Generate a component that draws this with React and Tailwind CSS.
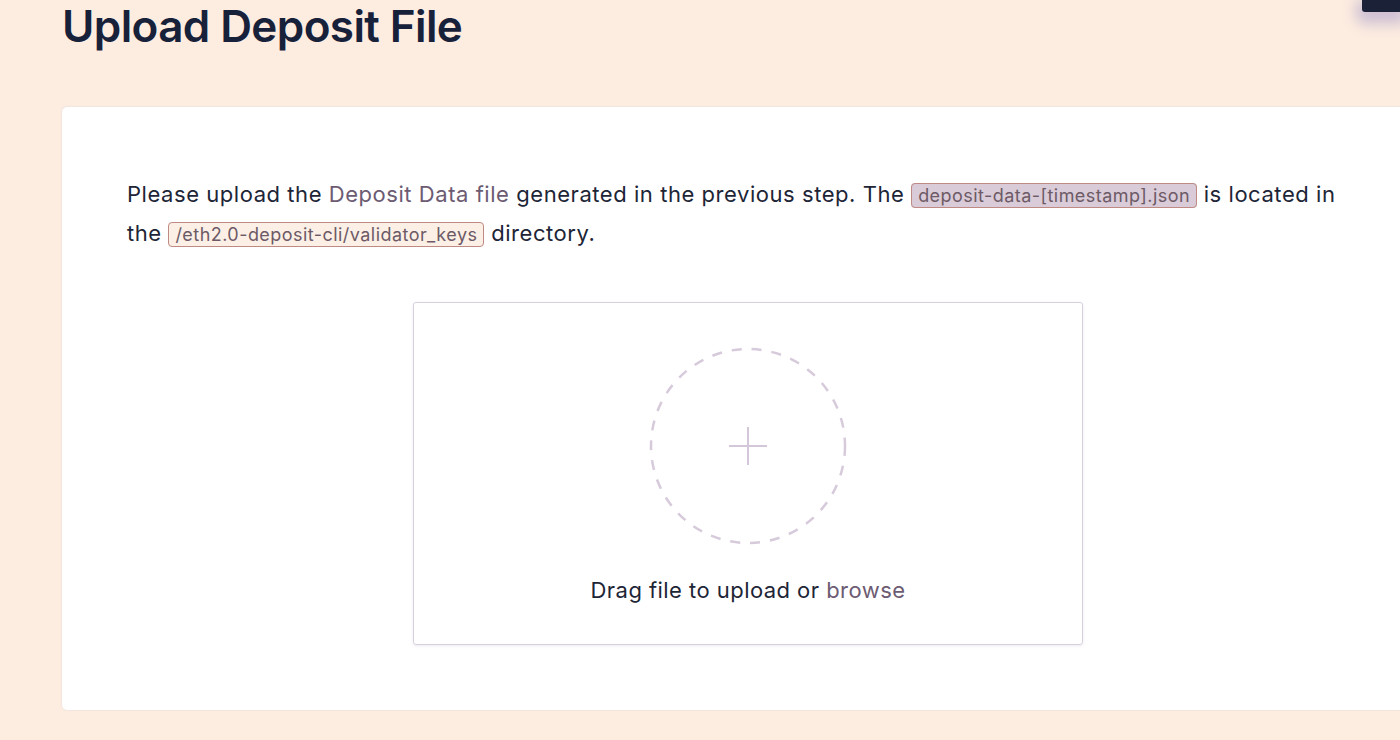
import React from 'react';

const Code = ({ children, selected }) => (
  <code
    className={`rounded-[4px] border border-[#c08a84] px-[6px] py-[1px] text-[18px] leading-[20px] tracking-[0.45px] text-[#6d5a66] ${
      selected ? 'bg-[#d9cbd7]' : 'bg-[#fcf0e6]'
    }`}
    style={{ fontFamily: 'Inter, "Noto Sans", sans-serif' }}
  >
    {children}
  </code>
);

export default function App() {
  return (
    <div
      className="h-[740px] w-[1400px] overflow-hidden bg-[#fdede0] pl-[62px]"
      style={{ fontFamily: 'Inter, "Noto Sans", sans-serif' }}
    >
      {/* Header */}
      <div className="flex items-start justify-between">
        <h1 className="text-[44px] font-semibold leading-[52px] tracking-[-0.6px] text-[#18213a]">
          Upload Deposit File
        </h1>
        <div className="h-[12px] w-[38px] rounded-bl-[3px] bg-[#1b2238] shadow-[0_6px_14px_6px_rgba(200,186,210,0.9)]"></div>
      </div>

      {/* Card */}
      <div className="mt-[55px] w-[1372px] rounded-[5px] bg-white px-[65px] pb-[65px] pt-[68px] shadow-[0_0_2px_rgba(200,200,215,0.6)]">
        <p className="text-[22px] leading-[39px] tracking-[0.55px] text-[#1d2536]">
          Please upload the <span className="text-[#6c5b72]">Deposit Data file</span> generated in the previous
          step. The <Code selected>deposit-data-[timestamp].json</Code> is located in the{' '}
          <Code>/eth2.0-deposit-cli/validator_keys</Code> directory.
        </p>

        {/* Dropzone */}
        <div className="mx-auto mt-[49px] flex h-[343px] w-[670px] flex-col items-center rounded-[3px] border border-[#d9d0de] pt-[43px] shadow-[0_1px_3px_rgba(180,170,195,0.25)]">
          <svg width="200" height="200" viewBox="0 0 200 200">
            <circle
              cx="100"
              cy="100"
              r="97"
              fill="none"
              stroke="#d6cadb"
              strokeWidth="2.5"
              strokeDasharray="10 10"
            />
            <path d="M100 81 V119 M81 100 H119" stroke="#d3c7d9" strokeWidth="2" />
          </svg>
          <p className="mt-[29px] text-[22px] leading-[30px] tracking-[0.45px] text-[#1d2536]">
            Drag file to upload or <span className="text-[#6c5b72]">browse</span>
          </p>
        </div>
      </div>
    </div>
  );
}
